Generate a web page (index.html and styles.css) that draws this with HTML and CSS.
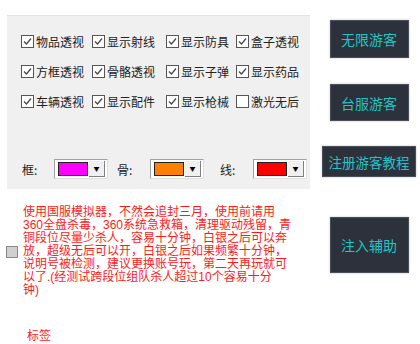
FILE: index.html
```html
<!DOCTYPE html>
<html lang="zh">
<head>
<meta charset="utf-8">
<link rel="stylesheet" href="styles.css">
</head>
<body>
<div class="app">
  <div class="left">
    <div class="panel">
      <div class="checks">
        <label class="cb"><svg class="box" viewBox="0 0 13 13"><rect x="0.5" y="0.5" width="12" height="12" fill="#fff" stroke="#555"/><polyline points="3,6.5 5.5,9 10,3.5" fill="none" stroke="#444" stroke-width="1.2"/></svg>物品透视</label>
        <label class="cb"><svg class="box" viewBox="0 0 13 13"><rect x="0.5" y="0.5" width="12" height="12" fill="#fff" stroke="#555"/><polyline points="3,6.5 5.5,9 10,3.5" fill="none" stroke="#444" stroke-width="1.2"/></svg>显示射线</label>
        <label class="cb"><svg class="box" viewBox="0 0 13 13"><rect x="0.5" y="0.5" width="12" height="12" fill="#fff" stroke="#555"/><polyline points="3,6.5 5.5,9 10,3.5" fill="none" stroke="#444" stroke-width="1.2"/></svg>显示防具</label>
        <label class="cb"><svg class="box" viewBox="0 0 13 13"><rect x="0.5" y="0.5" width="12" height="12" fill="#fff" stroke="#555"/><polyline points="3,6.5 5.5,9 10,3.5" fill="none" stroke="#444" stroke-width="1.2"/></svg>盒子透视</label>
        <label class="cb"><svg class="box" viewBox="0 0 13 13"><rect x="0.5" y="0.5" width="12" height="12" fill="#fff" stroke="#555"/><polyline points="3,6.5 5.5,9 10,3.5" fill="none" stroke="#444" stroke-width="1.2"/></svg>方框透视</label>
        <label class="cb"><svg class="box" viewBox="0 0 13 13"><rect x="0.5" y="0.5" width="12" height="12" fill="#fff" stroke="#555"/><polyline points="3,6.5 5.5,9 10,3.5" fill="none" stroke="#444" stroke-width="1.2"/></svg>骨骼透视</label>
        <label class="cb"><svg class="box" viewBox="0 0 13 13"><rect x="0.5" y="0.5" width="12" height="12" fill="#fff" stroke="#555"/><polyline points="3,6.5 5.5,9 10,3.5" fill="none" stroke="#444" stroke-width="1.2"/></svg>显示子弹</label>
        <label class="cb"><svg class="box" viewBox="0 0 13 13"><rect x="0.5" y="0.5" width="12" height="12" fill="#fff" stroke="#555"/><polyline points="3,6.5 5.5,9 10,3.5" fill="none" stroke="#444" stroke-width="1.2"/></svg>显示药品</label>
        <label class="cb"><svg class="box" viewBox="0 0 13 13"><rect x="0.5" y="0.5" width="12" height="12" fill="#fff" stroke="#555"/><polyline points="3,6.5 5.5,9 10,3.5" fill="none" stroke="#444" stroke-width="1.2"/></svg>车辆透视</label>
        <label class="cb"><svg class="box" viewBox="0 0 13 13"><rect x="0.5" y="0.5" width="12" height="12" fill="#fff" stroke="#555"/><polyline points="3,6.5 5.5,9 10,3.5" fill="none" stroke="#444" stroke-width="1.2"/></svg>显示配件</label>
        <label class="cb"><svg class="box" viewBox="0 0 13 13"><rect x="0.5" y="0.5" width="12" height="12" fill="#fff" stroke="#555"/><polyline points="3,6.5 5.5,9 10,3.5" fill="none" stroke="#444" stroke-width="1.2"/></svg>显示枪械</label>
        <label class="cb"><svg class="box" viewBox="0 0 13 13"><rect x="0.5" y="0.5" width="12" height="12" fill="#fff" stroke="#555"/></svg>激光无后</label>
      </div>
      <div class="colors">
        <span class="clabel">框:</span>
        <span class="combo"><span class="swatch sw-magenta"></span><span class="drop">▼</span></span>
        <span class="clabel l2">骨:</span>
        <span class="combo"><span class="swatch sw-orange"></span><span class="drop">▼</span></span>
        <span class="clabel l3">线:</span>
        <span class="combo"><span class="swatch sw-red"></span><span class="drop">▼</span></span>
      </div>
    </div>
    <div class="notice">
      <span class="smallbox"></span>
      <p class="warn">使用国服模拟器，不然会追封三月，使用前请用<br>360全盘杀毒，360系统急救箱，清理驱动残留，青<br>铜段位尽量少杀人，容易十分钟，白银之后可以奔<br>放，超级无后可以开，白银之后如果频繁十分钟，<br>说明号被检测，建议更换账号玩，第二天再玩就可<br>以了.(经测试跨段位组队杀人超过10个容易十分<br>钟)</p>
    </div>
    <div class="tag">标签</div>
  </div>
  <div class="right">
    <button class="btn b1">无限游客</button>
    <button class="btn b2">台服游客</button>
    <button class="btn b3">注册游客教程</button>
    <button class="btn b4">注入辅助</button>
  </div>
</div>
</body>
</html>
```

FILE: styles.css
```css
html, body {
  margin: 0;
  padding: 0;
  background: #ffffff;
  font-family: "Noto Sans CJK SC", "Noto Sans", sans-serif;
}
.app {
  display: flex;
  width: 420px;
  height: 344px;
}
.left {
  width: 318px;
  display: flex;
  flex-direction: column;
}
.panel {
  margin: 15px 0 0 7px;
  width: 303px;
  height: 174px;
  box-sizing: border-box;
  background: #f0f0f0;
  border-top: 1px solid #e3e3e3;
  padding: 19px 0 0 14px;
}
.checks {
  display: grid;
  grid-template-columns: 71px 74px 70px auto;
  row-gap: 17px;
}
.cb {
  display: flex;
  align-items: center;
  height: 13px;
  font-size: 12px;
  color: #222;
  white-space: nowrap;
  line-height: 13px;
}
.box {
  width: 13px;
  height: 13px;
  margin-right: 2px;
  flex: none;
}
.colors {
  display: flex;
  align-items: center;
  margin-top: 51px;
  padding-left: 1px;
  font-size: 12px;
  color: #222;
}
.clabel {
  width: 32px;
}
.l2 {
  margin-left: 9px;
  width: 33px;
}
.l3 {
  margin-left: 16px;
  width: 33px;
}
.combo {
  display: flex;
  align-items: center;
  width: 54px;
  height: 20px;
  box-sizing: border-box;
  border: 1px solid #a0a0a0;
  border-right-color: #e0e0e0;
  border-bottom-color: #e0e0e0;
  background: #ffffff;
  padding: 2px 1px 2px 3px;
}
.swatch {
  width: 30px;
  height: 14px;
  box-sizing: border-box;
  border: 1px solid #222;
}
.sw-magenta { background: #ff00ff; }
.sw-orange { background: #ff8000; }
.sw-red { background: #ff0000; }
.drop {
  margin-left: 1px;
  width: 16px;
  height: 16px;
  box-sizing: border-box;
  background: #f0f0f0;
  border-right: 1px solid #808080;
  border-bottom: 1px solid #808080;
  font-size: 6px;
  line-height: 15px;
  text-align: center;
  color: #000;
}
.notice {
  display: flex;
  align-items: center;
  margin-top: 17px;
  padding-left: 6px;
}
.smallbox {
  width: 12px;
  height: 12px;
  box-sizing: border-box;
  border: 1px solid #8a8a8a;
  background: #d0d0d0;
  margin-right: 5px;
  flex: none;
}
.warn {
  margin: 0;
  font-family: "Liberation Sans", "Noto Sans CJK SC", sans-serif;
  font-size: 12px;
  line-height: 13px;
  color: #ff1a1a;
  white-space: nowrap;
}
.tag {
  margin: 31px 0 0 27px;
  font-size: 12px;
  line-height: 13px;
  color: #ff1a1a;
}
.right {
  flex: 1;
  display: flex;
  flex-direction: column;
  align-items: center;
  padding-top: 20px;
}
.btn {
  font-family: "Noto Sans CJK SC", "Noto Sans", sans-serif;
  background: #2c313c;
  color: #22c4c6;
  border: 1px solid #4a4f5a;
  box-shadow: 0 0 2px rgba(0,0,0,0.25);
  font-size: 14px;
  padding: 0;
  width: 79px;
}
.b1 { height: 38px; }
.b2 { height: 37px; margin-top: 26px; }
.b3 { height: 31px; margin-top: 25px; width: 94px; font-size: 13.5px; }
.b4 { height: 56px; margin-top: 40px; }
```
